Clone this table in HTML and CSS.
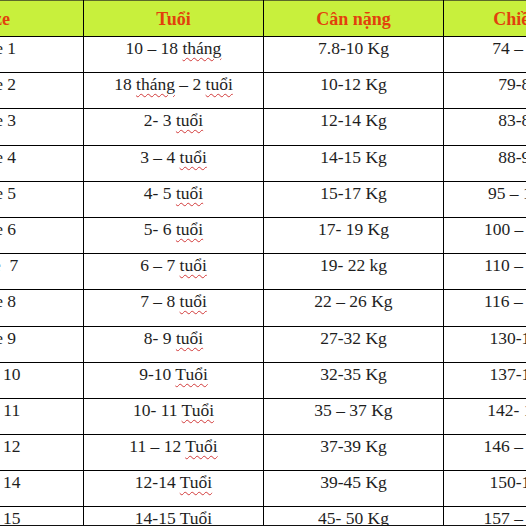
FILE: index.html
```html
<!DOCTYPE html>
<html lang="vi">
<head>
<meta charset="utf-8">
<title>Bảng size</title>
<link rel="stylesheet" href="styles.css">
</head>
<body>
<div class="sheet">
<table class="size-table">
  <colgroup>
    <col class="c1"><col class="c2"><col class="c3"><col class="c4">
  </colgroup>
  <thead>
    <tr><th>Size</th><th>Tuổi</th><th>Cân nặng</th><th>Chiều cao</th></tr>
  </thead>
  <tbody>
    <tr><td>Size 1</td><td>10 – 18 <span class="sp">tháng</span></td><td>7.8-10 Kg</td><td>74 – 79 cm</td></tr>
    <tr><td>Size 2</td><td>18 <span class="sp">tháng</span> – 2 <span class="sp">tuổi</span></td><td>10-12 Kg</td><td>79-83 cm</td></tr>
    <tr><td>Size 3</td><td>2- 3 <span class="sp">tuổi</span></td><td>12-14 Kg</td><td>83-88 cm</td></tr>
    <tr><td>Size 4</td><td>3 – 4 <span class="sp">tuổi</span></td><td>14-15 Kg</td><td>88-95 cm</td></tr>
    <tr><td>Size 5</td><td>4- 5 <span class="sp">tuổi</span></td><td>15-17 Kg</td><td>95 – 100 cm</td></tr>
    <tr><td>Size 6</td><td>5- 6 <span class="sp">tuổi</span></td><td>17- 19 Kg</td><td>100 – 110 cm</td></tr>
    <tr><td>Size&nbsp; 7</td><td>6 – 7 <span class="sp">tuổi</span></td><td>19- 22 kg</td><td>110 – 116 cm</td></tr>
    <tr><td>Size 8</td><td>7 – 8 <span class="sp">tuổi</span></td><td>22 – 26 Kg</td><td>116 – 130 cm</td></tr>
    <tr><td>Size 9</td><td>8- 9 <span class="sp">tuổi</span></td><td>27-32 Kg</td><td>130-137 cm</td></tr>
    <tr><td>Size 10</td><td>9-10 <span class="sp">Tuổi</span></td><td>32-35 Kg</td><td>137-142 cm</td></tr>
    <tr><td>Size 11</td><td>10- 11 <span class="sp">Tuổi</span></td><td>35 – 37 Kg</td><td>142- 146 cm</td></tr>
    <tr><td>Size 12</td><td>11 – 12 <span class="sp">Tuổi</span></td><td>37-39 Kg</td><td>146 – 150 cm</td></tr>
    <tr><td>Size 14</td><td>12-14 <span class="sp">Tuổi</span></td><td>39-45 Kg</td><td>150-157 cm</td></tr>
    <tr><td>Size 15</td><td>14-15 <span class="sp">Tuổi</span></td><td>45- 50 Kg</td><td>157 – 165 cm</td></tr>
  </tbody>
</table>
</div>
</body>
</html>
```
FILE: styles.css
```css
html, body {
  margin: 0;
  padding: 0;
  background: #fff;
}

.sheet {
  width: 526px;
  height: 526px;
  overflow: hidden;
  box-sizing: border-box;
  border-bottom: 1px solid #111;
}

.size-table {
  border-collapse: collapse;
  table-layout: fixed;
  width: 714px;
  margin-left: -95px;
  font-family: "Liberation Serif", "Times New Roman", serif;
  color: #1e1e1e;
}

.c1 { width: 178px; }
.c2, .c3 { width: 180px; }
.c4 { width: 176px; }

.size-table th,
.size-table td {
  border: 1px solid #000;
  text-align: center;
  padding: 0 4px;
}

.size-table thead tr {
  height: 36px;
}

.size-table th {
  background: #c8f03c;
  color: #e2400c;
  font-weight: bold;
  font-size: 18px;
  line-height: 22px;
  vertical-align: middle;
  border-top-color: #5c6a2a;
}

.size-table tbody tr {
  height: 36.2px;
}

.size-table td {
  font-size: 17.5px;
  line-height: 20px;
  vertical-align: top;
  padding-top: 1px;
}

.sp {
  text-decoration: underline wavy #d23a3a;
  text-decoration-thickness: 1px;
  text-underline-offset: 3px;
}
```
